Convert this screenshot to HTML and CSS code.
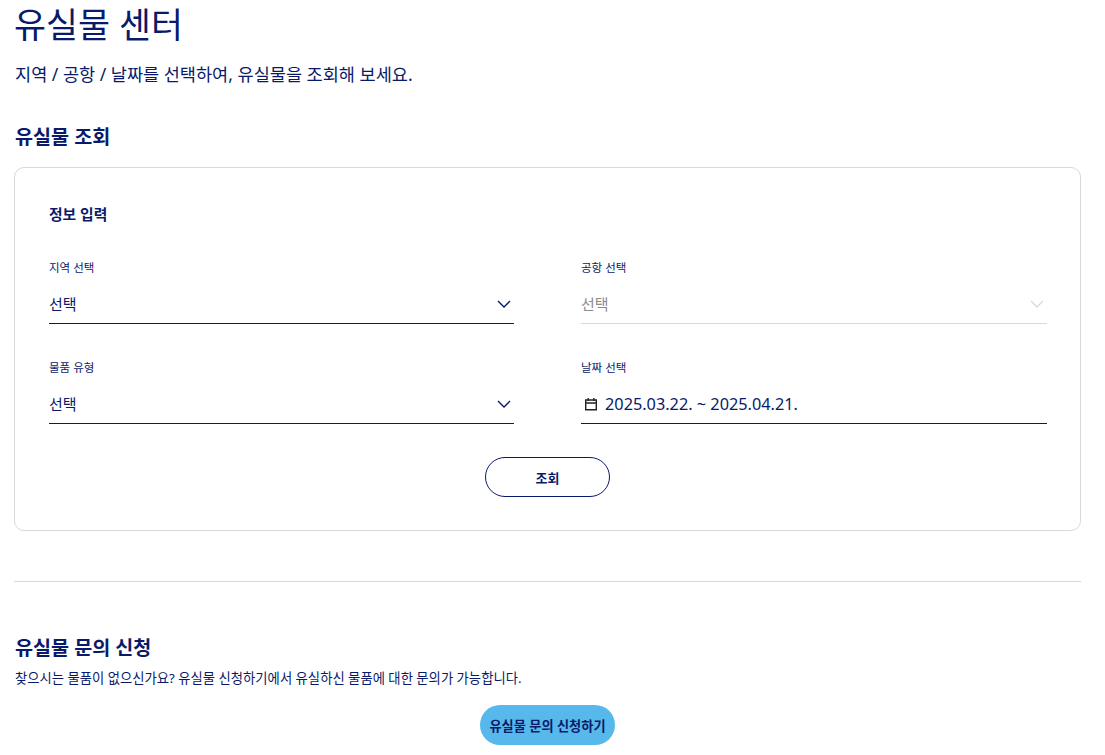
FILE: index.html
```html
<!DOCTYPE html>
<html lang="ko">
  <head>
    <meta charset="UTF-8" />
    <meta name="viewport" content="width=device-width, initial-scale=1.0" />
    <title>유실물 센터</title>
    <link rel="stylesheet" href="styles.css">
  </head>
  <body>
    <h1>유실물 센터</h1>
    <p class="lead">지역 / 공항 / 날짜를 선택하여, 유실물을 조회해 보세요.</p>

    <h2 class="search-title">유실물 조회</h2>
    <div class="card">
      <h3>정보 입력</h3>
      <div class="form-grid">
        <div class="field">
          <label>지역 선택</label>
          <div class="control">
            <span>선택</span>
            <svg class="chevron" width="16" height="16" viewBox="0 0 16 16"><path d="M2 5l6 6 6-6" /></svg>
          </div>
        </div>
        <div class="field disabled">
          <label>공항 선택</label>
          <div class="control">
            <span>선택</span>
            <svg class="chevron" width="16" height="16" viewBox="0 0 16 16"><path d="M2 5l6 6 6-6" /></svg>
          </div>
        </div>
        <div class="field">
          <label>물품 유형</label>
          <div class="control">
            <span>선택</span>
            <svg class="chevron" width="16" height="16" viewBox="0 0 16 16"><path d="M2 5l6 6 6-6" /></svg>
          </div>
        </div>
        <div class="field">
          <label>날짜 선택</label>
          <div class="control date">
            <svg class="calendar" width="14" height="14" viewBox="0 0 14 14"><path d="M1.7 3h10.6v9.8H1.7zM1.7 6h10.6M4.2 1v3M9.8 1v3" /></svg>
            <span>2025.03.22. ~ 2025.04.21.</span>
          </div>
        </div>
      </div>
      <div class="actions">
        <button class="btn-outline">조회</button>
      </div>
    </div>

    <hr>

    <h2>유실물 문의 신청</h2>
    <p class="note">찾으시는 물품이 없으신가요? 유실물 신청하기에서 유실하신 물품에 대한 문의가 가능합니다.</p>
    <div class="actions">
      <button class="btn-fill">유실물 문의 신청하기</button>
    </div>
  </body>
</html>
```
FILE: styles.css
```css
html {
  overflow: hidden;
}
body {
  margin: 0;
  padding: 0 24px 0 14px;
  height: 755px;
  overflow: hidden;
  box-sizing: border-box;
  background-color: white;
  color: #0a1a6a;
  font-family: "Noto Sans", "Noto Sans CJK KR", sans-serif;
}
h1 {
  margin: 0;
  padding-top: 1px;
  font-size: 34.8px;
  font-weight: 400;
  line-height: 48px;
}
.lead {
  margin: 13px 0 0 1px;
  font-size: 17.55px;
  line-height: 24px;
}
h2 {
  margin: 0 0 0 1px;
  font-size: 19.6px;
  font-weight: 700;
  line-height: 26px;
}
.search-title {
  margin-top: 38px;
}
.card {
  margin-top: 17px;
  padding: 34px 33px 33px 34px;
  height: 364px;
  box-sizing: border-box;
  border: 1px solid #d9d9d9;
  border-radius: 10px;
}
h3 {
  margin: 0;
  font-size: 14.8px;
  font-weight: 700;
  line-height: 24px;
}
.form-grid {
  margin-top: 33px;
  display: grid;
  grid-template-columns: 465fr 466fr;
  column-gap: 67px;
  row-gap: 35px;
}
label {
  display: block;
  font-size: 11.5px;
  line-height: 18px;
}
.control {
  display: flex;
  align-items: center;
  justify-content: space-between;
  margin-top: 8px;
  height: 39px;
  padding-bottom: 1px;
  box-sizing: border-box;
  border-bottom: 1px solid #0a1a6a;
  font-size: 15px;
}
.chevron {
  margin-right: 2px;
  fill: none;
  stroke: #0a1a6a;
  stroke-width: 1.4;
}
.date {
  justify-content: flex-start;
  gap: 7px;
  padding-left: 3px;
  font-size: 16.3px;
}
.calendar {
  fill: none;
  stroke: #222;
  stroke-width: 1.4;
}
.disabled .control {
  color: #8c8c8c;
  border-bottom-color: #d9d9d9;
}
.disabled .chevron {
  stroke: #d9d9d9;
}
.actions {
  display: flex;
  justify-content: center;
}
.card .actions {
  margin-top: 33px;
  padding-right: 1px;
}
button {
  height: 40px;
  font-family: inherit;
  font-size: 13px;
  font-weight: 700;
  color: #0a1a6a;
  cursor: pointer;
}
.btn-outline {
  width: 125px;
  background-color: white;
  border: 1px solid #0a1a6a;
  border-radius: 20px;
}
.btn-fill {
  width: 135px;
  padding: 0;
  font-size: 13.2px;
  background-color: #57b8ec;
  border: none;
  border-radius: 20px;
}
hr {
  margin: 50px 0 53px;
  border: none;
  border-top: 1px solid #d9d9d9;
}
.note {
  margin: 7px 0 0 1px;
  font-size: 13.33px;
  line-height: 20px;
}
.note + .actions {
  margin-top: 17px;
}
```
